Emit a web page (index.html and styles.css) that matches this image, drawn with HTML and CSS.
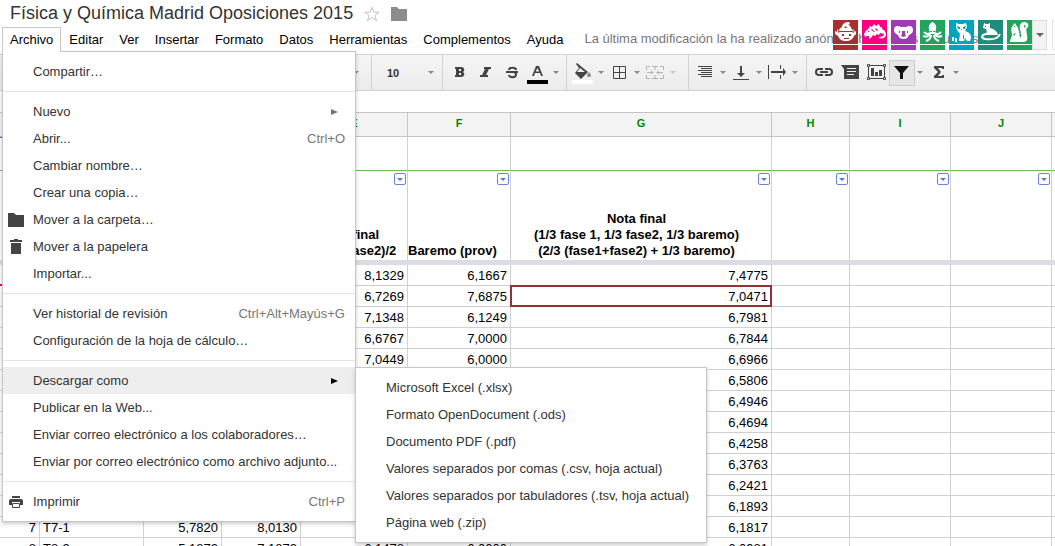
FILE: index.html
```html
<!DOCTYPE html>
<html lang="es">
<head>
<meta charset="utf-8">
<title>Física y Química Madrid Oposiciones 2015</title>
<link rel="stylesheet" href="styles.css">
</head>
<body>
<div class="app">
  <header class="header">
    <div class="title-row">
      <h1 class="doc-title">Física y Química Madrid Oposiciones 2015</h1>
      <button class="plain" aria-label="Destacar"><svg width="18" height="16" viewBox="0 0 18 16"><path d="M9 1.2l1.800 5h5.400l-4.300 3.200 1.600 5.200L9 11.500l-4.500 3.100 1.600-5.200L1.800 6.200h5.400z" fill="#fff" stroke="#c4c4c4"/></svg></button>
      <button class="plain" aria-label="Carpeta"><svg width="16" height="14" viewBox="0 0 16 14"><path d="M0 0h6l2 2h8v12H0z" fill="#8c8c8c"/></svg></button>
    </div>
    <nav class="menubar">
      <div class="menu-root">
        <button class="menu-tab open" aria-expanded="true">Archivo</button>
        <ul class="menu">
          <li><button class="item"><span class="label">Compartir…</span></button></li>
          <li class="sep"></li>
          <li><button class="item"><span class="label">Nuevo</span><svg class="arrow" width="7" height="6" viewBox="0 0 7 6"><path d="M0 0l7 3-7 3z" fill="#777"/></svg></button></li>
          <li><button class="item"><span class="label">Abrir...</span><span class="key">Ctrl+O</span></button></li>
          <li><button class="item"><span class="label">Cambiar nombre…</span></button></li>
          <li><button class="item"><span class="label">Crear una copia…</span></button></li>
          <li><button class="item"><svg class="icon" width="16" height="14" viewBox="0 0 16 14"><path d="M0 0h6l2 2h8v12H0z" fill="#444"/></svg><span class="label">Mover a la carpeta…</span></button></li>
          <li><button class="item"><svg class="icon" width="16" height="15" viewBox="0 0 16 15"><path d="M2 1h4V0h4v1h4v2H2zM3 4h10v11H3z" fill="#444"/></svg><span class="label">Mover a la papelera</span></button></li>
          <li><button class="item"><span class="label">Importar...</span></button></li>
          <li class="sep"></li>
          <li><button class="item"><span class="label">Ver historial de revisión</span><span class="key">Ctrl+Alt+Mayús+G</span></button></li>
          <li><button class="item"><span class="label">Configuración de la hoja de cálculo…</span></button></li>
          <li class="sep"></li>
          <li class="parent"><button class="item active" aria-expanded="true"><span class="label">Descargar como</span><svg class="arrow" width="7" height="6" viewBox="0 0 7 6"><path d="M0 0l7 3-7 3z" fill="#000"/></svg></button>
            <ul class="menu submenu">
              <li><button class="item"><span class="label">Microsoft Excel (.xlsx)</span></button></li>
              <li><button class="item"><span class="label">Formato OpenDocument (.ods)</span></button></li>
              <li><button class="item"><span class="label">Documento PDF (.pdf)</span></button></li>
              <li><button class="item"><span class="label">Valores separados por comas (.csv, hoja actual)</span></button></li>
              <li><button class="item"><span class="label">Valores separados por tabuladores (.tsv, hoja actual)</span></button></li>
              <li><button class="item"><span class="label">Página web (.zip)</span></button></li>
            </ul>
          </li>
          <li><button class="item"><span class="label">Publicar en la Web...</span></button></li>
          <li><button class="item"><span class="label">Enviar correo electrónico a los colaboradores…</span></button></li>
          <li><button class="item"><span class="label">Enviar por correo electrónico como archivo adjunto...</span></button></li>
          <li class="sep"></li>
          <li><button class="item"><svg class="icon" width="16" height="14" viewBox="0 0 16 14"><path d="M4 1h8v2H4zM3 4h10a2 2 0 0 1 2 2v4h-3V7H4v3H1V6a2 2 0 0 1 2-2z" fill="#444"/><path d="M4.500 8.500h7v4h-7z" fill="#fff" stroke="#444"/></svg><span class="label">Imprimir</span><span class="key">Ctrl+P</span></button></li>
        </ul>
      </div>
      <button class="menu-tab">Editar</button>
      <button class="menu-tab">Ver</button>
      <button class="menu-tab">Insertar</button>
      <button class="menu-tab">Formato</button>
      <button class="menu-tab">Datos</button>
      <button class="menu-tab">Herramientas</button>
      <button class="menu-tab">Complementos</button>
      <button class="menu-tab">Ayuda</button>
      <span class="status">La última modificación la ha realizado anónimo hace unos segundos</span>
    </nav>
    <div class="people">
      <div class="avatar red"><svg viewBox="0 0 25 24"><path d="M6 11c0-2 1-3 3-4 0-3 3-5 7-5l1 2-2 1c2 0 3 2 4 5l2-1-1 2z"/><path d="M7 12h12l2 1c0-1-1-2 0-3l1 2 1-1v3l-2 2c-1 3-4 5-8 5s-7-2-8-5l-3-2v-3l2 1V9c1 1 2 2 1 4z"/><path class="hole" d="M8 11l11 0v1H8zM9 14h2v2H9zM16 14h2v2h-2zM11 18h5v1h-5zM11 8l2-2 1 2z"/></svg></div>
      <div class="avatar pink"><svg viewBox="0 0 25 24"><path d="M2 14c1-2 2-4 4-5l2-3 2 1 2-3 2 2 3-2 1 3 2 0v2c3 1 4 4 4 6-1 3-3 4-7 3v-1c3 0 5-1 5-3l-4-1-1 2-2-1-2 2-2-1-2 3-2 1v-3H5l-2 1z"/><path class="hole" d="M6 11h1v1H6zM10 9l3 3-1 0-3-2zM14 8l2 3h-1l-2-2z"/></svg></div>
      <div class="avatar purple"><svg viewBox="0 0 25 24"><path d="M3 10c0-4 3-5 7-3h5c4-2 7-1 7 3 0 3-2 4-4 5-1 3-3 4-5.500 4S8 18 7 15c-2-1-4-2-4-5z"/><path class="hole" d="M11 11h3v3l1 2-2.500 1L10 16l1-2zM8 11h1v2H8zM16 11h1v2h-1z"/></svg></div>
      <div class="avatar green"><svg viewBox="0 0 25 24"><path d="M12.500 2C15 3 17 6 16 9l-1 5h-5L9 9c-1-3 1-6 3.500-7z"/><path class="limb" d="M10 13c-2 2-4 1-6-1M15 13c2 2 4 1 6-1M10 14c-1 3-4 3-7 2M15 14c1 3 4 3 7 2M11 15c0 3-2 5-5 6M14 15c0 3 2 5 5 6"/><path class="hole" d="M10 11h2v1h-2zM13 11h2v1h-2z"/></svg></div>
      <div class="avatar cyan"><svg viewBox="0 0 25 24"><path d="M7 3l3 1h4l3-1 1 4-2 4c4 1 6 3 6 7l-1 3h-3l-2-3-1 3h-5l1-7-3-4-1-3z"/><path d="M3 17l2 0v4H3zM6 18h2v4H6z"/><path class="hole" d="M8 6l3 1v2H9zM17 6l-3 1v2h2zM12 9h1v1h-1zM14 15h1v4h-1z"/></svg></div>
      <div class="avatar teal"><svg viewBox="0 0 25 24"><path d="M6 3l2 1h2l2-1v5c4 1 7 3 8 7H8c1-3 1-4 0-6L5 8z"/><path class="limb" d="M17 14l-9 0c-5 1-5 4-1 5 7 1 13 0 15-5"/><path class="hole" d="M7 6h1v1H7z"/></svg></div>
      <div class="avatar green"><svg viewBox="0 0 25 24"><path d="M3 21c1-3 2-4 2-7L4 9l2-4 2-2 1 2c2 2 3 5 3 8l2 1-1-5c-1-4 1-7 4-7 4 0 5 3 4 5-2 1-2 4-1 8 1 5 0 7-4 7H3z"/><path class="hole" d="M7 6h1v1H7zM17 5l2 1-2 2zM12 15l2-2v5zM6 14l3-1-2 3z"/></svg></div>
      <button class="people-more" aria-label="Más usuarios"><svg width="8" height="4" viewBox="0 0 8 4"><path d="M0 0h8L4 4z" fill="#666"/></svg></button>
      <div class="next-edge"></div>
    </div>
  </header>

  <div class="toolbar">
    <div class="group fonts"><i class="caret"></i></div>
    <div class="group size"><button class="size-button">10</button><i class="caret"></i></div>
    <div class="group">
      <button class="tool bold" aria-label="Negrita"><svg viewBox="0 0 26 26"><path fill-rule="evenodd" d="M8 7h6c4 0 4 4 2 5 2 1 2 5-2 5H8v-2h1V9H8zM12 9v2h2V9zM12 13v2h2v-2z"/></svg></button>
      <button class="tool" aria-label="Cursiva"><svg viewBox="0 0 26 26"><path d="M11 7h7v2h-2l-3 6h2v2H7v-2h2l3-6h-1z"/></svg></button>
      <button class="tool" aria-label="Tachado"><svg viewBox="0 0 26 26"><path d="M7 11h12v2H7z"/><path class="slim" d="M17 10c0-3-7-3-7 0M10 15c0 3 7 3 7-.500 0-1-1-2-2-2"/></svg></button>
      <button class="tool" aria-label="Color del texto"><svg viewBox="0 0 26 26"><path fill-rule="evenodd" d="M11 6h3l4 10h-2l-1-3h-5l-1 3H7zM12.500 8l-1.800 3.500h3.500z"/><path d="M2 20h21v4H2z" fill="#000"/></svg></button>
      <i class="caret"></i>
    </div>
    <div class="group tight">
      <button class="tool" aria-label="Color de relleno"><svg viewBox="0 0 26 26"><path d="M2 20h21v4H2z" fill="#fff"/><path d="M6 4l1-1 11 9-7 7-6-6 4-5zM10 8l-3 4h8z" fill-rule="evenodd"/><path d="M19 12c3 4 2 5 0 5s-3-1 0-5z" fill="#888"/></svg></button>
      <i class="caret"></i>
      <button class="tool" aria-label="Bordes"><svg viewBox="0 0 26 26"><path class="thin" d="M7.500 6.500h12v12h-12zM13.500 6.500v12M7.500 12.500h12"/></svg></button>
      <i class="caret"></i>
      <button class="tool off" aria-label="Combinar celdas"><svg viewBox="0 0 26 26"><path class="thin" d="M8 6.500H4.500V10M4.500 15v3.500H8M10 6.500h6M10 18.500h6M18 6.500h3.500V10M21.500 15v3.500H18M13 7v3M13 15v3M5 12.500h6M21 12.500h-6M9 10.500l2 2-2 2M17 10.500l-2 2 2 2"/></svg></button>
      <i class="caret pale"></i>
    </div>
    <div class="group tight">
      <button class="tool" aria-label="Alineación horizontal"><svg viewBox="0 0 26 26"><path class="thin" d="M6 6.500h14M9 8.500h11M6 10.500h14M9 12.500h11M6 14.500h14M9 16.500h11"/></svg></button>
      <i class="caret"></i>
      <button class="tool" aria-label="Alineación vertical"><svg viewBox="0 0 26 26"><path d="M12 6h2v7h3l-4 4-4-4h3zM5 19h16v1H5z"/></svg></button>
      <i class="caret"></i>
      <button class="tool" aria-label="Ajuste del texto"><svg viewBox="0 0 26 26"><path d="M4 5h1v14H4zM7 11h12V8l3 4-3 4v-3H7zM16 5h1v4h-1zM16 15h1v4h-1z"/></svg></button>
      <i class="caret"></i>
    </div>
    <div class="group last">
      <button class="tool" aria-label="Insertar enlace"><svg viewBox="0 0 26 26"><path class="line" d="M12 9H8a3 3 0 0 0 0 6h4M14 9h4a3 3 0 0 1 0 6h-4M9 12h8"/></svg></button>
      <button class="tool" aria-label="Insertar comentario"><svg viewBox="0 0 26 26"><path fill-rule="evenodd" d="M4 5h18v14H7V9zM10 8v1h9V8zM10 11v1h9v-1zM10 14v1h7v-1z"/></svg></button>
      <button class="tool" aria-label="Insertar gráfico"><svg viewBox="0 0 26 26"><path class="thin" d="M5.500 5.500h16v13h-16z"/><path d="M8 8h3v8H8zM12 12h3v4h-3zM16 10h3v6h-3z"/><path class="thin" fill="#fff" d="M4.500 4.500h2v2h-2zM20.500 4.500h2v2h-2zM4.500 17.500h2v2h-2zM20.500 17.500h2v2h-2z"/></svg></button>
      <button class="tool pressed" aria-label="Filtro" aria-pressed="true"><svg viewBox="0 0 26 26"><path d="M5 6h15l-6 7v6h-3v-6z" fill="#111"/></svg></button>
      <i class="caret"></i>
      <button class="tool" aria-label="Funciones"><svg viewBox="0 0 26 26"><path d="M9 6h10v3h-2V8h-4l3 4-3 4h4v-1h2v3H9v-2l4-4-4-4z"/></svg></button>
      <i class="caret"></i>
    </div>
  </div>
  <div class="formula-bar"></div>

  <table class="grid">
    <colgroup><col class="ca"><col class="cb"><col class="cc"><col class="cd"><col class="ce"><col class="cf"><col class="cg"><col class="ch"><col class="ci"><col class="ci"><col></colgroup>
    <thead>
      <tr class="letters"><th>A</th><th>B</th><th>C</th><th>D</th><th>E</th><th>F</th><th>G</th><th>H</th><th>I</th><th>J</th><th></th></tr>
    </thead>
    <tbody>
      <tr class="blank"><td class="peer-blue"></td><td></td><td></td><td></td><td></td><td></td><td></td><td></td><td></td><td></td><td></td></tr>
      <tr class="names">
        <th></th><th></th><th></th><th></th>
        <th><div class="name mid"><button class="filter" aria-label="Filtrar E"></button><span>Nota final<br>(fase1+fase2)/2</span></div></th>
        <th><div class="name left"><button class="filter" aria-label="Filtrar F"></button><span>Baremo (prov)</span></div></th>
        <th><div class="name mid"><button class="filter" aria-label="Filtrar G"></button><span>Nota final<br>(1/3 fase 1, 1/3 fase2, 1/3 baremo)<br>(2/3 (fase1+fase2) + 1/3 baremo)</span></div></th>
        <th><div class="name"><button class="filter" aria-label="Filtrar H"></button></div></th>
        <th><div class="name"><button class="filter" aria-label="Filtrar I"></button></div></th>
        <th><div class="name"><button class="filter" aria-label="Filtrar J"></button></div></th>
        <th></th>
      </tr>
      <tr class="freeze"><td colspan="11"></td></tr>
      <tr><td class="peer-pink"></td><td></td><td></td><td></td><td>8,1329</td><td>6,1667</td><td>7,4775</td><td></td><td></td><td></td><td></td></tr>
      <tr><td></td><td></td><td></td><td></td><td>6,7269</td><td>7,6875</td><td class="peer-red">7,0471</td><td></td><td></td><td></td><td></td></tr>
      <tr><td></td><td></td><td></td><td></td><td>7,1348</td><td>6,1249</td><td>6,7981</td><td></td><td></td><td></td><td></td></tr>
      <tr><td></td><td></td><td></td><td></td><td>6,6767</td><td>7,0000</td><td>6,7844</td><td></td><td></td><td></td><td></td></tr>
      <tr><td></td><td></td><td></td><td></td><td>7,0449</td><td>6,0000</td><td>6,6966</td><td></td><td></td><td></td><td></td></tr>
      <tr><td></td><td></td><td></td><td></td><td></td><td></td><td>6,5806</td><td></td><td></td><td></td><td></td></tr>
      <tr><td></td><td></td><td></td><td></td><td></td><td></td><td>6,4946</td><td></td><td></td><td></td><td></td></tr>
      <tr><td></td><td></td><td></td><td></td><td></td><td></td><td>6,4694</td><td></td><td></td><td></td><td></td></tr>
      <tr><td></td><td></td><td></td><td></td><td></td><td></td><td>6,4258</td><td></td><td></td><td></td><td></td></tr>
      <tr><td></td><td></td><td></td><td></td><td></td><td></td><td>6,3763</td><td></td><td></td><td></td><td></td></tr>
      <tr><td></td><td></td><td></td><td></td><td></td><td></td><td>6,2421</td><td></td><td></td><td></td><td></td></tr>
      <tr><td></td><td></td><td></td><td></td><td></td><td></td><td>6,1893</td><td></td><td></td><td></td><td></td></tr>
      <tr><td>7</td><td class="text">T7-1</td><td>5,7820</td><td>8,0130</td><td></td><td></td><td>6,1817</td><td></td><td></td><td></td><td></td></tr>
      <tr><td>8</td><td class="text">T8-2</td><td>5,1873</td><td>7,1873</td><td>6,1478</td><td>6,0000</td><td>6,0981</td><td></td><td></td><td></td><td></td></tr>
    </tbody>
  </table>
</div>
</body>
</html>
```
FILE: styles.css
```css
* { box-sizing: border-box; }

body {
  margin: 0;
  background: #fff;
  font: 13px/16px "Liberation Sans", Arial, sans-serif;
  color: #000;
}

button {
  margin: 0;
  padding: 0;
  border: 0;
  background: none;
  font: inherit;
  color: inherit;
}

svg { display: block; }

.app {
  height: 100vh;
  overflow: hidden;
}

/* Header */
.header {
  position: relative;
  padding-bottom: 2px;
}

.title-row {
  display: flex;
  align-items: center;
  gap: 10px;
  height: 27px;
  padding-left: 10px;
}

.doc-title {
  margin: 0;
  font-size: 18px;
  line-height: 27px;
  font-weight: normal;
  color: #333;
}

.menubar {
  display: flex;
  height: 25px;
  padding-left: 2px;
  white-space: nowrap;
}

.menu-root { position: relative; }

.menu-tab {
  height: 25px;
  padding: 0 7px 1px;
  border: 1px solid transparent;
  border-bottom: 0;
}

.menu-tab.open {
  position: relative;
  z-index: 4;
  background: #fff;
  border-color: #c6c6c6;
}

.status {
  padding-left: 13px;
  line-height: 24px;
  color: #777;
}

/* Drop-down menus */
.menu {
  position: absolute;
  z-index: 3;
  top: 24px;
  left: 0;
  width: 354px;
  margin: 0;
  padding: 6px 0;
  list-style: none;
  background: #fff;
  border: 1px solid #c6c6c6;
  box-shadow: 0 2px 4px rgba(0, 0, 0, .2);
  color: #333;
}

.parent { position: relative; }

.submenu {
  top: 0;
  left: 100%;
  width: 352px;
}

.item {
  display: grid;
  grid-template-columns: 30px 1fr auto;
  align-items: center;
  width: 100%;
  height: 27px;
  padding-right: 10px;
  text-align: left;
  white-space: nowrap;
}

.item.active { background: #eee; }
.icon { grid-column: 1; margin-left: 5px; }
.label { grid-column: 2; }
.key { grid-column: 3; color: #777; }
.arrow { grid-column: 3; margin-right: 7px; }

.sep {
  height: 1px;
  margin: 6px 0;
  background: #e5e5e5;
}

/* Collaborators, laid over the status text */
.people {
  position: absolute;
  top: 20px;
  right: 0;
  display: flex;
  height: 30px;
}

.avatar {
  width: 25px;
  height: 30px;
  margin-right: 4px;
  border-bottom: 5px solid;
  background: #fff;
}

.avatar svg {
  width: 25px;
  height: 24px;
  background: currentColor;
  fill: #fff;
}

.avatar .hole { fill: currentColor; }
.avatar .limb { fill: none; stroke: #fff; stroke-width: 2; }
.red { color: #a52f31; }
.pink { color: #ff0080; }
.purple { color: #a03ab4; }
.green { color: #22a45c; }
.cyan { color: #00a5bd; }
.teal { color: #208c7c; }

.people-more {
  display: flex;
  align-items: center;
  justify-content: center;
  width: 15px;
  margin-left: -4px;
  background: #f3f3f3;
  border: 1px solid #ddd;
}

.next-edge {
  width: 3px;
  margin-left: 5px;
  border: 1px solid #e5e5e5;
  border-right: 0;
}

/* Toolbar */
.toolbar {
  display: flex;
  height: 37px;
  border-top: 1px solid #d2d2d2;
  border-bottom: 1px solid #d2d2d2;
  background: linear-gradient(#f5f5f5, #ececec);
}

.group {
  display: flex;
  align-items: center;
  width: 124px;
  padding-left: 4px;
  border-right: 1px solid #d2d2d2;
}

.group.tight { width: 122px; padding-left: 3px; }
.group.tight + .tight { width: 118px; }
.group.fonts { width: 372px; justify-content: flex-end; padding-right: 10px; }
.group.size { width: 71px; justify-content: space-between; padding: 0 6px 0 15px; }
.group.last { flex: 1; border-right: 0; }

.size-button {
  font-size: 11px;
  font-weight: bold;
  color: #333;
}

.tool {
  width: 26px;
  height: 26px;
}

.tool svg { width: 26px; height: 26px; fill: #444; }
.tool .line { fill: none; stroke: #444; stroke-width: 2; }
.tool .slim { fill: none; stroke: #444; stroke-width: 2; }
.tool .thin { stroke: #444; stroke-width: 1; }
.tool .thin:not([fill]) { fill: none; }
.tool.off { opacity: .35; }

.tool.pressed {
  background: #e6e6e6;
  box-shadow: inset 0 0 0 1px #ccc;
}

.caret {
  width: 10px;
  height: 3px;
  background: #888;
  clip-path: polygon(2px 0, 8px 0, 5px 3px);
}

.caret.pale { opacity: .4; }

.formula-bar { height: 21px; }

/* Sheet */
.grid {
  width: 100%;
  table-layout: fixed;
  border-collapse: separate;
  border-spacing: 0;
  border-top: 1px solid #c4c4c4;
}

.ca { width: 40px; }
.cb { width: 104px; }
.cc { width: 78px; }
.cd { width: 79px; }
.ce { width: 107px; }
.cf { width: 103px; }
.cg { width: 261px; }
.ch { width: 78px; }
.ci { width: 101px; }

.grid th,
.grid td {
  height: 21px;
  padding: 0;
  border-right: 1px solid #d0d0d0;
  border-bottom: 1px solid #d0d0d0;
}

.grid td {
  padding: 2px 3px 0 0;
  line-height: 18px;
  text-align: right;
}

.grid td:last-child,
.grid th:last-child { padding: 0; border-right: 0; }

.grid td.text { padding-left: 3px; text-align: left; }

.grid .letters th {
  height: 24px;
  padding-bottom: 3px;
  font-size: 11px;
  color: #080;
  background: #f3f3f3;
  border-color: #c4c4c4;
}

.grid .blank td {
  height: 34px;
  border-bottom-color: #6aba50;
}

.grid .names th { height: 89px; border-bottom: 0; }
.grid .freeze td { height: 5px; line-height: 0; border: 0; background: #dadde3; }

.name {
  display: flex;
  flex-direction: column;
  justify-content: space-between;
  height: 89px;
  padding: 2px 1px 1px 0;
  white-space: nowrap;
}

.name.mid span { align-self: center; padding-right: 8px; text-align: center; }
.name.left span { align-self: flex-start; }

.filter {
  display: flex;
  align-items: center;
  justify-content: center;
  align-self: flex-end;
  width: 12px;
  height: 12px;
  border: 1px solid #6b82d6;
  border-radius: 2px;
  background: #fff;
}

.filter::before {
  content: "";
  border: solid transparent;
  border-width: 3px 3px 0;
  border-top-color: #5c76d4;
}

.grid .peer-blue { border-top: 1px solid #4272db; }
.grid .peer-pink { border-bottom: 2px solid #e6005c; }
.grid .peer-red { position: relative; }

.peer-red::after {
  content: "";
  position: absolute;
  inset: -1px;
  border: 2px solid #953334;
}
```
